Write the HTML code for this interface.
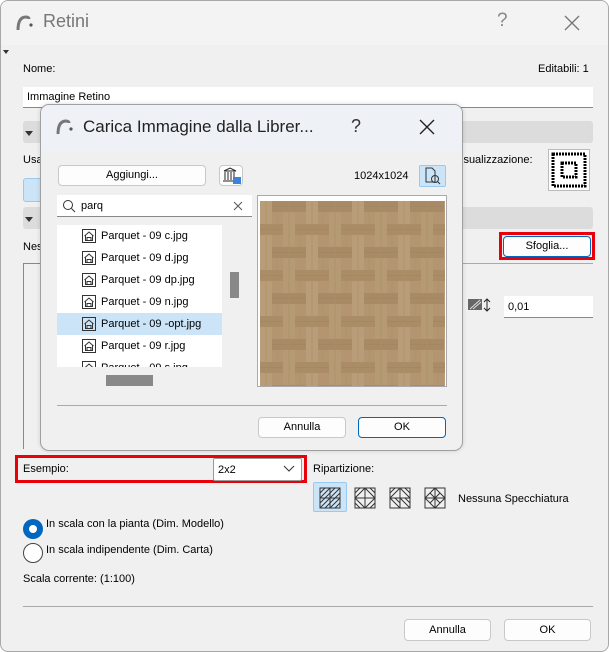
<!DOCTYPE html>
<html><head><meta charset="utf-8">
<style>
*{box-sizing:border-box;margin:0;padding:0}
body{width:609px;height:652px;overflow:hidden;background:#fff;font-family:"Liberation Sans",sans-serif;font-size:11px;color:#000;position:relative}
.a{position:absolute}
.win{left:0;top:0;width:609px;height:652px;border:1px solid #a8a8a8;border-radius:8px;background:#f0f0f0;overflow:hidden}
.btn{position:absolute;background:#fdfdfd;border:1px solid #c8c8c8;border-radius:4px;text-align:center;font-size:11px}
.bar{position:absolute;background:#dcdcdc;border-radius:3px}
.tri{position:absolute;width:0;height:0;border-left:4px solid transparent;border-right:4px solid transparent;border-top:5px solid #333}
.inp{position:absolute;background:#fff;border-bottom:1px solid #888}
.item{position:absolute;left:0;width:165px;height:22px;line-height:22px;padding-left:44px;font-size:11px}
.fi{position:absolute;left:25px;top:4px}
</style></head><body>
<svg width="0" height="0" style="position:absolute"><defs>
<symbol id="h" viewBox="0 0 14 14"><rect x="0.5" y="0.5" width="13" height="13" fill="none" stroke="#333"/><path d="M2.5 7L7 3L11.5 7M3.5 6.5V11.5H10.5V6.5M5 11.5V8.5H9V11.5" fill="none" stroke="#333"/></symbol>
<symbol id="logo" viewBox="0 0 20 20"><path d="M3 17 C3 8 6 4 11 4 C13 4 14 5 14 6" stroke="#777" stroke-width="3" fill="none"/><circle cx="16" cy="12" r="1.6" fill="#555"/></symbol>
<pattern id="wood" width="46" height="46" patternUnits="userSpaceOnUse">
<rect width="46" height="46" fill="#b39671"/>
<rect x="0" y="0" width="12" height="46" fill="#b99d78"/>
<rect x="23" y="0" width="12" height="46" fill="#b69a74"/>
<rect x="12" y="0" width="34" height="11" fill="#a88b65"/>
<rect x="35" y="23" width="34" height="11" fill="#aa8d67"/>
<rect x="-11" y="23" width="34" height="11" fill="#aa8d67"/>
<path d="M6 0V46M29 0V46M17 11V23M40 34V46" stroke="#ab8f6a" stroke-width="0.7"/>
<path d="M12 5.5H46M0 28.5H23M35 28.5H46" stroke="#9f835e" stroke-width="0.6"/>
</pattern>
</defs></svg>
<div class="a win">
  <div class="a" style="left:0;top:0;width:609px;height:44px;background:#f3f3f3"></div>
  <svg class="a" style="left:14px;top:12px" width="20" height="20"><use href="#logo"/></svg>
  <div class="a" style="left:42px;top:10px;font-size:18px;color:#777">Retini</div>
  <div class="a" style="left:496px;top:9px;font-size:19px;color:#888">?</div>
  <svg class="a" style="left:563px;top:14px" width="16" height="16"><path d="M1 1L15 15M15 1L1 15" stroke="#777" stroke-width="1.3"/></svg>
  <div class="tri" style="left:2px;top:49px;border-top-width:4px;border-left-width:3px;border-right-width:3px"></div>
  <div class="a" style="left:22px;top:62px">Nome:</div>
  <div class="a" style="left:537px;top:62px">Editabili: 1</div>
  <div class="inp" style="left:22px;top:86px;width:570px;height:21px;padding:4px 4px">Immagine Retino</div>
  <div class="bar" style="left:22px;top:120px;width:570px;height:22px"></div>
  <div class="tri" style="left:24px;top:130px"></div>
  <div class="a" style="left:22px;top:153px">Usa</div>
  <div class="a" style="left:460px;top:153px">isualizzazione:</div>
  <div class="a" style="left:547px;top:148px;width:42px;height:42px;background:#fff;border:1px solid #bbb"></div>
  <svg class="a" style="left:549px;top:150px" width="38" height="38"><rect x="3" y="3" width="32" height="32" fill="none" stroke="#000" stroke-width="3" stroke-dasharray="2 1"/><rect x="12" y="12" width="14" height="14" fill="none" stroke="#000" stroke-width="3" stroke-dasharray="2 1"/></svg>
  <div class="a" style="left:22px;top:177px;width:30px;height:24px;background:#cce4f7;border:1px solid #99c9ef;border-radius:3px"></div>
  <div class="bar" style="left:22px;top:206px;width:570px;height:22px"></div>
  <div class="tri" style="left:24px;top:216px"></div>
  <div class="a" style="left:22px;top:240px">Nes</div>
  <div class="a" style="left:498px;top:231px;width:96px;height:28px;border:3px solid #e8000b"></div>
  <div class="btn" style="left:502px;top:235px;width:88px;height:21px;line-height:19px;border-color:#0067c0">Sfoglia...</div>
  <div class="a" style="left:461px;top:262px;width:131px;height:1px;background:#aaa"></div>
  <div class="a" style="left:22px;top:262px;width:18px;height:186px;border-left:1px solid #888;border-top:1px solid #888"></div>
  <svg class="a" style="left:467px;top:297px" width="24" height="14"><rect x="0" y="1" width="14" height="11" fill="#666"/><path d="M2 11L12 2M5 11L13 4" stroke="#ddd"/><path d="M19 1V13M16 4L19 1L22 4M16 10L19 13L22 10" stroke="#222" fill="none"/></svg>
  <div class="inp" style="left:503px;top:295px;width:89px;height:22px;padding:5px 4px">0,01</div>

  <div class="a" style="left:14px;top:454px;width:292px;height:28px;border:3px solid #e8000b"></div>
  <div class="a" style="left:22px;top:462px">Esempio:</div>
  <div class="a" style="left:212px;top:457px;width:89px;height:23px;background:#fff;border:1px solid #999;border-radius:2px;padding:5px 4px">2x2</div>
  <svg class="a" style="left:282px;top:464px" width="12" height="8"><path d="M1 1L6 6L11 1" stroke="#333" fill="none"/></svg>
  <div class="a" style="left:312px;top:462px">Ripartizione:</div>
  <div class="a" style="left:312px;top:481px;width:34px;height:30px;background:#cce4f7;border:1px solid #99c9ef;border-radius:2px"></div>
  <svg class="a" style="left:318px;top:486px" width="130" height="22">
    <g stroke="#333" fill="none"><rect x="1" y="1" width="20" height="20"/><path d="M11 1V21M1 11H21M1 6L6 1M1 11L11 1M6 11L11 6M11 6L16 1M11 11L21 1M16 11L21 6M1 16L6 11M1 21L11 11M6 21L11 16M11 16L16 11M11 21L21 11M16 21L21 16"/></g>
    <g transform="translate(35,0)" stroke="#333" fill="none"><rect x="1" y="1" width="20" height="20"/><path d="M11 1V21M1 11H21M1 6L6 1M1 11L11 1M11 1L21 11M16 1L21 6M1 16L6 21M1 11L11 21M11 21L21 11M16 21L21 16"/></g>
    <g transform="translate(70,0)" stroke="#333" fill="none"><rect x="1" y="1" width="20" height="20"/><path d="M11 1V21M1 11H21M1 6L6 1M1 11L11 1M11 1L21 11M16 1L21 6M1 11L11 21M6 11L11 16M11 11L21 21M16 11L21 16"/></g>
    <g transform="translate(105,0)" stroke="#333" fill="none"><rect x="1" y="1" width="20" height="20"/><path d="M11 1V21M1 11H21M1 11L11 1L21 11L11 21Z M6 6L16 16M16 6L6 16"/></g>
  </svg>
  <div class="a" style="left:457px;top:492px">Nessuna Specchiatura</div>
  <div class="a" style="left:22px;top:518px;width:20px;height:20px;border-radius:50%;background:#0067c0"></div>
  <div class="a" style="left:28px;top:524px;width:8px;height:8px;border-radius:50%;background:#fff"></div>
  <div class="a" style="left:45px;top:517px">In scala con la pianta (Dim. Modello)</div>
  <div class="a" style="left:22px;top:542px;width:20px;height:20px;border-radius:50%;border:1px solid #444;background:#fff"></div>
  <div class="a" style="left:45px;top:543px">In scala indipendente (Dim. Carta)</div>
  <div class="a" style="left:22px;top:572px">Scala corrente: (1:100)</div>
  <div class="a" style="left:22px;top:605px;width:570px;height:1px;background:#aaa"></div>
  <div class="btn" style="left:403px;top:618px;width:87px;height:22px;line-height:20px">Annulla</div>
  <div class="btn" style="left:503px;top:618px;width:87px;height:22px;line-height:20px">OK</div>
</div>

<div class="a" style="left:40px;top:104px;width:423px;height:347px;border:1px solid #a0a0a0;border-radius:9px;background:#f0f0f0;overflow:hidden;box-shadow:0 0 4px rgba(0,0,0,.15)">
  <div class="a" style="left:0;top:0;width:423px;height:46px;background:#eef2f7"></div>
  <svg class="a" style="left:14px;top:12px" width="20" height="20"><use href="#logo"/></svg>
  <div class="a" style="left:42px;top:12px;font-size:17px;color:#222">Carica Immagine dalla Librer...</div>
  <div class="a" style="left:310px;top:11px;font-size:18px;color:#333">?</div>
  <svg class="a" style="left:378px;top:14px" width="16" height="16"><path d="M1 1L15 15M15 1L1 15" stroke="#222" stroke-width="1.4"/></svg>
  <div class="btn" style="left:17px;top:60px;width:148px;height:21px;line-height:19px">Aggiungi...</div>
  <div class="btn" style="left:178px;top:60px;width:24px;height:21px"></div>
  <svg class="a" style="left:181px;top:62px" width="20" height="18"><path d="M2 4L8 1L14 4H2M3 5V13M6 5V13M9 5V13M12 5V13M1 14H15" stroke="#222" fill="none"/><rect x="11" y="10" width="8" height="7" fill="#3b82d8"/></svg>
  <div class="a" style="left:313px;top:65px">1024x1024</div>
  <div class="a" style="left:378px;top:60px;width:27px;height:22px;background:#cce4f7;border:1px solid #99c9ef;border-radius:2px"></div>
  <svg class="a" style="left:383px;top:62px" width="18" height="18"><path d="M2 1H8L11 4V15H2Z" stroke="#333" fill="none"/><circle cx="11" cy="12" r="3.5" stroke="#333" fill="none"/><path d="M13.5 14.5L16 17" stroke="#333"/></svg>
  <div class="a" style="left:16px;top:90px;width:195px;height:22px;background:#fff;border-bottom:1px solid #888"></div>
  <svg class="a" style="left:21px;top:94px" width="14" height="14"><circle cx="6" cy="6" r="4.5" stroke="#333" fill="none"/><path d="M9.5 9.5L13 13" stroke="#333"/></svg>
  <div class="a" style="left:40px;top:95px">parq</div>
  <svg class="a" style="left:192px;top:96px" width="10" height="10"><path d="M1 1L9 9M9 1L1 9" stroke="#555"/></svg>
  <div class="a" style="left:16px;top:120px;width:165px;height:142px;background:#fff;overflow:hidden">
    <div class="item" style="top:0">Parquet - 09 c.jpg<svg class="fi" width="14" height="14"><use href="#h"/></svg></div>
    <div class="item" style="top:22px">Parquet - 09 d.jpg<svg class="fi" width="14" height="14"><use href="#h"/></svg></div>
    <div class="item" style="top:44px">Parquet - 09 dp.jpg<svg class="fi" width="14" height="14"><use href="#h"/></svg></div>
    <div class="item" style="top:66px">Parquet - 09 n.jpg<svg class="fi" width="14" height="14"><use href="#h"/></svg></div>
    <div class="item" style="top:88px;background:#cce4f7">Parquet - 09 -opt.jpg<svg class="fi" width="14" height="14"><use href="#h"/></svg></div>
    <div class="item" style="top:110px">Parquet - 09 r.jpg<svg class="fi" width="14" height="14"><use href="#h"/></svg></div>
    <div class="item" style="top:132px">Parquet - 09 s.jpg<svg class="fi" width="14" height="14"><use href="#h"/></svg></div>
  </div>
  <div class="a" style="left:189px;top:167px;width:9px;height:26px;background:#888"></div>
  <div class="a" style="left:65px;top:270px;width:47px;height:11px;background:#888"></div>
  <div class="a" style="left:216px;top:90px;width:190px;height:192px;border:1px solid #aaa;background:#fff"></div>
  <svg class="a" style="left:219px;top:96px" width="185" height="185"><rect width="185" height="185" fill="url(#wood)"/></svg>
  <div class="a" style="left:16px;top:300px;width:390px;height:1px;background:#aaa"></div>
  <div class="btn" style="left:217px;top:312px;width:88px;height:21px;line-height:19px">Annulla</div>
  <div class="btn" style="left:317px;top:312px;width:88px;height:21px;line-height:19px;border-color:#0067c0">OK</div>
</div>
</body></html>
